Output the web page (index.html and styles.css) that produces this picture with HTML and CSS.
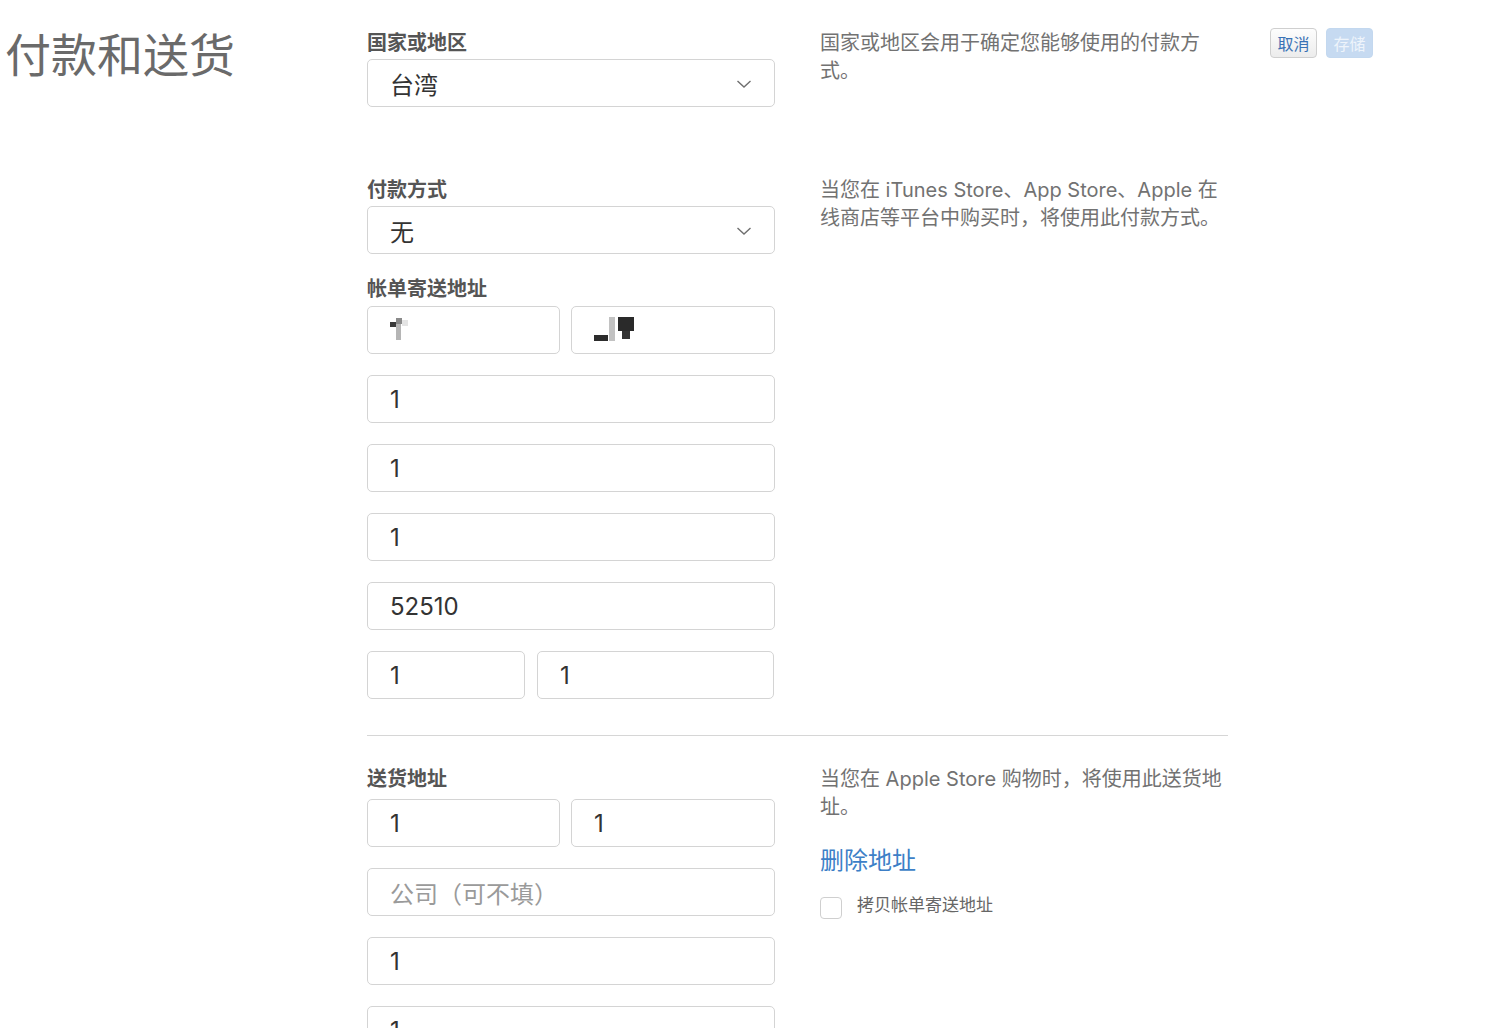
FILE: index.html
```html
<!DOCTYPE html>
<html lang="zh-CN">
<head>
  <meta charset="UTF-8">
  <meta name="viewport" content="width=device-width, initial-scale=1.0">
  <title>付款和送货</title>
  <link rel="stylesheet" href="styles.css">
</head>
<body>
  <div class="page">
    <h1 class="title">付款和送货</h1>

    <div class="main">
      <div class="section first">
        <div class="fields">
          <div class="label">国家或地区</div>
          <div class="select">
            <span>台湾</span>
            <svg class="chevron" width="16" height="10" viewBox="0 0 16 10"><path d="M1.5 2 L8 8 L14.5 2" fill="none" stroke="#6f6f6f" stroke-width="1.4"/></svg>
          </div>
        </div>
        <div class="desc">国家或地区会用于确定您能够使用的付款方式。</div>
      </div>

      <div class="section">
        <div class="fields">
          <div class="label">付款方式</div>
          <div class="select">
            <span>无</span>
            <svg class="chevron" width="16" height="10" viewBox="0 0 16 10"><path d="M1.5 2 L8 8 L14.5 2" fill="none" stroke="#6f6f6f" stroke-width="1.4"/></svg>
          </div>

          <div class="label sub">帐单寄送地址</div>
          <div class="stack">
            <div class="row name">
              <div class="input">
                <svg width="26" height="24" viewBox="0 0 26 24"><rect x="0" y="4" width="6" height="5" fill="#3a3a3a"/><rect x="6" y="0" width="6" height="6" fill="#8a8a8a"/><rect x="6" y="6" width="5" height="16" fill="#b5b5b5"/><rect x="12" y="2" width="6" height="6" fill="#e4e4e4"/></svg>
              </div>
              <div class="input">
                <svg width="46" height="26" viewBox="0 0 46 26"><rect x="0" y="18" width="14" height="6" fill="#2c2c2c"/><rect x="15" y="0" width="6" height="24" fill="#c2c2c2"/><rect x="24" y="0" width="16" height="14" fill="#2a2a2a"/><rect x="28" y="14" width="8" height="8" fill="#333"/></svg>
              </div>
            </div>
            <div class="input">1</div>
            <div class="input">1</div>
            <div class="input">1</div>
            <div class="input">52510</div>
            <div class="row city">
              <div class="input">1</div>
              <div class="input">1</div>
            </div>
          </div>
        </div>
        <div class="desc">当您在 iTunes Store、App Store、Apple 在线商店等平台中购买时，将使用此付款方式。</div>
      </div>

      <hr class="divider">

      <div class="section shipping">
        <div class="fields">
          <div class="label">送货地址</div>
          <div class="stack">
            <div class="row name">
              <div class="input">1</div>
              <div class="input">1</div>
            </div>
            <div class="input placeholder">公司（可不填）</div>
            <div class="input">1</div>
            <div class="input">1</div>
          </div>
        </div>
        <div class="desc">
          <p>当您在 Apple Store 购物时，将使用此送货地址。</p>
          <a class="link" href="#">删除地址</a>
          <label class="check"><span class="box"></span>拷贝帐单寄送地址</label>
        </div>
      </div>
    </div>

    <div class="actions">
      <button class="btn cancel">取消</button>
      <button class="btn save">存储</button>
    </div>
  </div>
</body>
</html>
```

FILE: styles.css
```css
body {
  margin: 0;
  font-family: Inter, "Noto Sans CJK SC", sans-serif;
  color: #333;
  background: #fff;
}
.page {
  display: grid;
  grid-template-columns: 362px 861px auto;
  padding: 29px 0 0 5px;
}
.title {
  margin: 1px 0 0;
  font-size: 46px;
  line-height: 50px;
  font-weight: 400;
  color: #6a6a6a;
}
.section {
  display: grid;
  grid-template-columns: 408px 408px;
  column-gap: 45px;
  margin-top: 69px;
}
.section.first {
  margin-top: 0;
}
.label {
  font-size: 20px;
  line-height: 28px;
  font-weight: 600;
  color: #555;
  margin-bottom: 2px;
}
.label.sub {
  margin-top: 21px;
  margin-bottom: 3px;
}
.shipping .label {
  margin-bottom: 6px;
}
.select,
.input {
  box-sizing: border-box;
  height: 48px;
  border: 1px solid #d4d4d4;
  border-radius: 5px;
  padding: 0 22px;
  display: flex;
  align-items: center;
  font-size: 24px;
  color: #333;
  background: #fff;
}
.select {
  justify-content: space-between;
  padding-right: 22px;
}
.chevron {
  margin-top: 2px;
}
.stack {
  display: flex;
  flex-direction: column;
  gap: 21px;
}
.row {
  display: grid;
  column-gap: 11px;
}
.row.name {
  grid-template-columns: 193px 204px;
}
.row.city {
  grid-template-columns: 158px 237px;
  column-gap: 12px;
}
.placeholder {
  color: #9a9a9a;
}
.desc {
  font-size: 20px;
  line-height: 28px;
  color: #727272;
}
.desc p {
  margin: 0;
}
.divider {
  margin: 36px 0 0;
  border: none;
  border-top: 1px solid #d6d6d6;
  height: 0;
}
.divider + .section {
  margin-top: 29px;
}
.link {
  display: block;
  margin-top: 24px;
  font-size: 24px;
  line-height: 32px;
  color: #3d7fc7;
  text-decoration: none;
}
.check {
  display: flex;
  align-items: center;
  gap: 15px;
  margin-top: 14px;
  font-size: 17px;
  color: #666;
}
.box {
  width: 20px;
  height: 20px;
  border: 1px solid #cfcfcf;
  border-radius: 4px;
  margin-top: 6px;
}
.actions {
  display: flex;
  gap: 9px;
  margin-left: 42px;
  margin-top: -1px;
  align-items: flex-start;
}
.btn {
  width: 47px;
  height: 30px;
  border-radius: 4px;
  font-family: inherit;
  font-size: 16px;
  padding: 0;
  cursor: pointer;
}
.cancel {
  border: 1px solid #cfcfcf;
  background: linear-gradient(#fdfdfd, #ececec);
  color: #3a72b5;
}
.save {
  border: 1px solid #c3d8ef;
  background: #c6daf1;
  color: #eef4fb;
}
```
